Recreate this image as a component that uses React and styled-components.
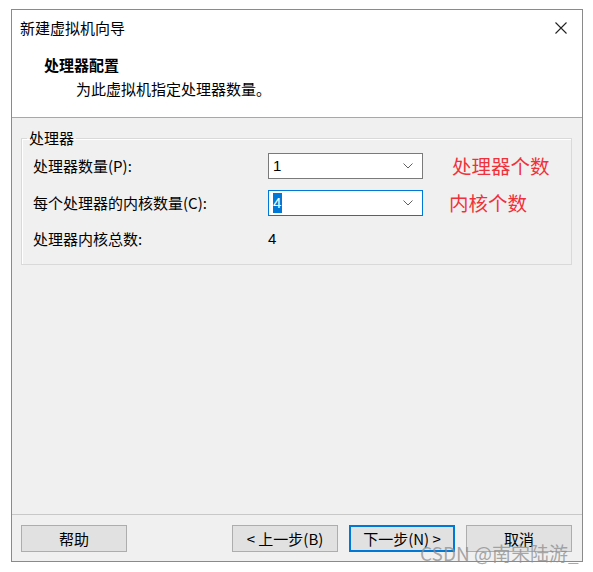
import React from "react";
import styled, { createGlobalStyle } from "styled-components";

const GlobalStyle = createGlobalStyle`
  html, body {
    margin: 0;
    padding: 0;
    background: #ffffff;
  }
  body {
    font-family: "Noto Sans CJK SC", "Liberation Sans", sans-serif;
    font-size: 15px;
    color: #000;
  }
`;

const App = () => {
  return (
    <Page>
      <GlobalStyle />
      <Window>
        <Header>
          <TitleRow>
            <Title>新建虚拟机向导</Title>
            <CloseIcon viewBox="0 0 12 12">
              <path d="M0.5 0.5 L11.5 11.5 M11.5 0.5 L0.5 11.5" stroke="#222" strokeWidth="1.1" fill="none" />
            </CloseIcon>
          </TitleRow>
          <Heading>处理器配置</Heading>
          <SubHeading>为此虚拟机指定处理器数量。</SubHeading>
        </Header>

        <Body>
          <Group>
            <Legend>处理器</Legend>
            <Grid>
              <Label>处理器数量(P):</Label>
              <Combo>
                <ComboValue>1</ComboValue>
                <Chevron />
              </Combo>
              <Note $offset={29}>处理器个数</Note>

              <Label>每个处理器的内核数量(C):</Label>
              <Combo $focused>
                <ComboValue>
                  <Selected>4</Selected>
                </ComboValue>
                <Chevron />
              </Combo>
              <Note $offset={26}>内核个数</Note>

              <Label $tall>处理器内核总数:</Label>
              <Total>4</Total>
              <span />
            </Grid>
          </Group>
        </Body>

        <Footer>
          <Button>帮助</Button>
          <Spacer />
          <Button>&lt; 上一步(B)</Button>
          <Button $primary>下一步(N) &gt;</Button>
          <Button>取消</Button>
        </Footer>
      </Window>
      <Watermark>CSDN @南宋陆游_</Watermark>
    </Page>
  );
};

export default App;

const Chevron = () => (
  <ChevronIcon viewBox="0 0 10 6">
    <path d="M0.5 0.5 L5 5 L9.5 0.5" stroke="#606060" strokeWidth="1" fill="none" />
  </ChevronIcon>
);

// Ventana

const Page = styled.div`
  position: relative;
  width: 593px;
  height: 572px;
  padding: 9px 0 0 11px;
  box-sizing: border-box;
`;

const Window = styled.div`
  width: 572px;
  height: 553px;
  box-sizing: border-box;
  border: 1px solid #8a8a8a;
  background: #f0f0f0;
  display: flex;
  flex-direction: column;
`;

const Header = styled.div`
  background: #ffffff;
  border-bottom: 1px solid #a8a8a8;
  height: 108px;
  box-sizing: border-box;
  padding-top: 8px;
`;

const TitleRow = styled.div`
  display: flex;
  align-items: center;
  justify-content: space-between;
  padding: 0 15px 0 8px;
  height: 20px;
`;

const Title = styled.div`
  line-height: 20px;
  font-size: 15px;
`;

const CloseIcon = styled.svg`
  width: 12px;
  height: 12px;
  margin-top: -1px;
`;

const Heading = styled.div`
  margin-top: 17px;
  padding-left: 32px;
  font-weight: bold;
  font-size: 15px;
  line-height: 20px;
`;

const SubHeading = styled.div`
  margin-top: 4px;
  padding-left: 64px;
  font-size: 15px;
  line-height: 20px;
`;

// Cuerpo

const Body = styled.div`
  flex: 1;
  padding: 10px 10px 0 9px;
`;

const Group = styled.fieldset`
  margin: 0;
  padding: 5px 0 15px 11px;
  border: 1px solid #d9d9d9;
  box-shadow: inset 1px 1px 0 #ffffff;
  min-width: 0;
`;

const Legend = styled.legend`
  padding: 0 2px;
  margin-left: -6px;
  font-size: 15px;
  line-height: 20px;
`;

const Grid = styled.div`
  display: grid;
  grid-template-columns: 235px 155px auto;
  row-gap: 11px;
  align-items: center;
`;

const Label = styled.div`
  font-size: 15px;
  line-height: 20px;
  ${(p) => p.$tall && "margin-top: 2px;"}
`;

const Combo = styled.div`
  height: 26px;
  box-sizing: border-box;
  background: #ffffff;
  border: 1px solid ${(p) => (p.$focused ? "#0078d7" : "#7a7a7a")};
  display: flex;
  align-items: center;
  justify-content: space-between;
  padding: 0 9px 0 4px;
`;

const ComboValue = styled.div`
  font-family: "Liberation Sans", sans-serif;
  font-size: 15px;
  line-height: 20px;
  display: flex;
  align-items: center;
`;

const Selected = styled.span`
  background: #0078d7;
  color: #ffffff;
  padding: 0 1px 0 0;
  line-height: 20px;
`;

const ChevronIcon = styled.svg`
  width: 10px;
  height: 6px;
`;

const Total = styled.div`
  font-family: "Liberation Sans", sans-serif;
  font-size: 15px;
  line-height: 20px;
  margin-top: 2px;
`;

const Note = styled.div`
  margin-left: ${(p) => p.$offset}px;
  color: #f0303a;
  font-size: 19.5px;
  line-height: 26px;
  white-space: nowrap;
`;

// Pie

const Footer = styled.div`
  border-top: 1px solid #c8c8c8;
  display: flex;
  gap: 11px;
  padding: 10px 10px 9px 9px;
`;

const Spacer = styled.div`
  flex: 1;
`;

const Button = styled.div`
  width: 106px;
  height: 27px;
  box-sizing: border-box;
  background: #e1e1e1;
  border: ${(p) => (p.$primary ? "2px solid #0078d7" : "1px solid #adadad")};
  display: flex;
  align-items: center;
  justify-content: center;
  font-size: 15px;
  line-height: 20px;
`;

const Watermark = styled.div`
  position: absolute;
  left: 420px;
  top: 541px;
  font-size: 19px;
  line-height: 24px;
  color: rgba(140, 140, 140, 0.75);
  white-space: nowrap;
  pointer-events: none;
`;
